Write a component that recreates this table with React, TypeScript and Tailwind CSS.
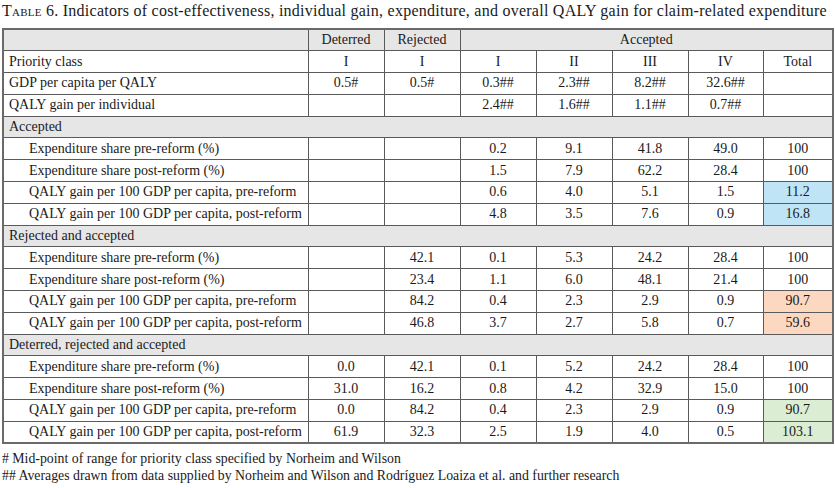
import type { ReactNode } from "react";

type Tint = "blue" | "orange" | "green";

type Row =
  | { kind: "section"; label: string }
  | { kind: "data"; label: string; indent?: boolean; cells: string[]; tint?: Tint };

const tintBg: Record<Tint, string> = {
  blue: "bg-[#bfe4f6]",
  orange: "bg-[#fbd8bf]",
  green: "bg-[#dbedd2]",
};

const rows: Row[] = [
  { kind: "data", label: "Priority class", cells: ["I", "I", "I", "II", "III", "IV", "Total"] },
  { kind: "data", label: "GDP per capita per QALY", cells: ["0.5#", "0.5#", "0.3##", "2.3##", "8.2##", "32.6##", ""] },
  { kind: "data", label: "QALY gain per individual", cells: ["", "", "2.4##", "1.6##", "1.1##", "0.7##", ""] },
  { kind: "section", label: "Accepted" },
  { kind: "data", indent: true, label: "Expenditure share pre-reform (%)", cells: ["", "", "0.2", "9.1", "41.8", "49.0", "100"] },
  { kind: "data", indent: true, label: "Expenditure share post-reform (%)", cells: ["", "", "1.5", "7.9", "62.2", "28.4", "100"] },
  { kind: "data", indent: true, label: "QALY gain per 100 GDP per capita, pre-reform", cells: ["", "", "0.6", "4.0", "5.1", "1.5", "11.2"], tint: "blue" },
  { kind: "data", indent: true, label: "QALY gain per 100 GDP per capita, post-reform", cells: ["", "", "4.8", "3.5", "7.6", "0.9", "16.8"], tint: "blue" },
  { kind: "section", label: "Rejected and accepted" },
  { kind: "data", indent: true, label: "Expenditure share pre-reform (%)", cells: ["", "42.1", "0.1", "5.3", "24.2", "28.4", "100"] },
  { kind: "data", indent: true, label: "Expenditure share post-reform (%)", cells: ["", "23.4", "1.1", "6.0", "48.1", "21.4", "100"] },
  { kind: "data", indent: true, label: "QALY gain per 100 GDP per capita, pre-reform", cells: ["", "84.2", "0.4", "2.3", "2.9", "0.9", "90.7"], tint: "orange" },
  { kind: "data", indent: true, label: "QALY gain per 100 GDP per capita, post-reform", cells: ["", "46.8", "3.7", "2.7", "5.8", "0.7", "59.6"], tint: "orange" },
  { kind: "section", label: "Deterred, rejected and accepted" },
  { kind: "data", indent: true, label: "Expenditure share pre-reform (%)", cells: ["0.0", "42.1", "0.1", "5.2", "24.2", "28.4", "100"] },
  { kind: "data", indent: true, label: "Expenditure share post-reform (%)", cells: ["31.0", "16.2", "0.8", "4.2", "32.9", "15.0", "100"] },
  { kind: "data", indent: true, label: "QALY gain per 100 GDP per capita, pre-reform", cells: ["0.0", "84.2", "0.4", "2.3", "2.9", "0.9", "90.7"], tint: "green" },
  { kind: "data", indent: true, label: "QALY gain per 100 GDP per capita, post-reform", cells: ["61.9", "32.3", "2.5", "1.9", "4.0", "0.5", "103.1"], tint: "green" },
];

const line = "border border-[#5a5a5a]";

function Cell({ children, className = "" }: { children?: ReactNode; className?: string }) {
  return <td className={`${line} h-[21.8px] p-0 text-center leading-none ${className}`}>{children}</td>;
}

export default function App() {
  return (
    <div className="w-[835px] h-[488px] bg-white text-[#1a1a1a] font-['Liberation_Serif',serif] pl-[2px]">
      <div className="h-[28px] pt-[1px] text-[16px] leading-[19px] tracking-[0.25px] whitespace-nowrap">
        <span className="[font-variant:small-caps]">Table 6.</span> Indicators of cost-effectiveness, individual gain,
        expenditure, and overall QALY gain for claim-related expenditure
      </div>

      <table className="table-fixed border-collapse border-2 border-[#6a6a6a] w-[830px] text-[14px]">
        <colgroup>
          <col className="w-[305px]" />
          <col className="w-[76px]" />
          <col className="w-[76px]" />
          <col className="w-[76px]" />
          <col className="w-[76px]" />
          <col className="w-[76px]" />
          <col className="w-[75px]" />
          <col className="w-[70px]" />
        </colgroup>
        <tbody>
          <tr className="bg-[#e6e6e6]">
            <Cell />
            <Cell>Deterred</Cell>
            <Cell>Rejected</Cell>
            <td colSpan={5} className={`${line} h-[21.8px] p-0 text-center leading-none`}>
              Accepted
            </td>
          </tr>
          {rows.map((r, i) =>
            r.kind === "section" ? (
              <tr key={i} className="bg-[#e6e6e6]">
                <td colSpan={8} className={`${line} h-[21.8px] p-0 pl-[5px] text-left leading-none`}>
                  {r.label}
                </td>
              </tr>
            ) : (
              <tr key={i}>
                <td className={`${line} h-[21.8px] p-0 text-left leading-none ${r.indent ? "pl-[25px]" : "pl-[5px]"}`}>
                  {r.label}
                </td>
                {r.cells.map((c, j) => (
                  <Cell key={j} className={j === 6 && r.tint ? tintBg[r.tint] : ""}>
                    {c}
                  </Cell>
                ))}
              </tr>
            )
          )}
        </tbody>
      </table>

      <div className="mt-[6px] text-[13.8px] leading-[17px]">
        <div># Mid-point of range for priority class specified by Norheim and Wilson</div>
        <div>## Averages drawn from data supplied by Norheim and Wilson and Rodríguez Loaiza et al. and further research</div>
      </div>
    </div>
  );
}
